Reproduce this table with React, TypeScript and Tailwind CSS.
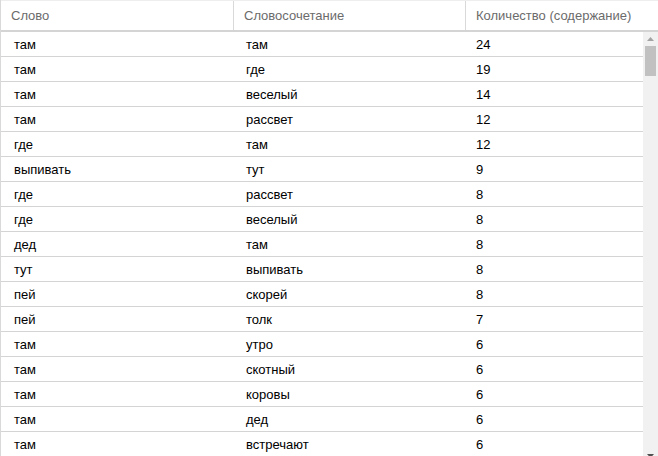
import React from 'react'

const rows: [string, string, number][] = [
  ['там', 'там', 24],
  ['там', 'где', 19],
  ['там', 'веселый', 14],
  ['там', 'рассвет', 12],
  ['где', 'там', 12],
  ['выпивать', 'тут', 9],
  ['где', 'рассвет', 8],
  ['где', 'веселый', 8],
  ['дед', 'там', 8],
  ['тут', 'выпивать', 8],
  ['пей', 'скорей', 8],
  ['пей', 'толк', 7],
  ['там', 'утро', 6],
  ['там', 'скотный', 6],
  ['там', 'коровы', 6],
  ['там', 'дед', 6],
  ['там', 'встречают', 6],
]

function App() {
  return (
    <div className="h-[456px] w-[658px] overflow-hidden border-l border-[#d9d9d9] bg-white font-['Liberation_Sans',Arial,sans-serif] text-[13px]">
      {/* Header */}
      <div className="flex h-[32px] border-b-2 border-t border-[#d4d4d4] border-t-[#eeeeee] text-[#6b6b6b]">
        <div className="flex w-[233px] items-center border-r border-[#d9d9d9] pl-[10px]">Слово</div>
        <div className="flex w-[232px] items-center border-r border-[#d9d9d9] pl-[10px]">Словосочетание</div>
        <div className="flex flex-1 items-center pl-[10px]">Количество (содержание)</div>
      </div>

      {/* Body */}
      <div className="flex h-[424px]">
        <div className="flex-1 overflow-hidden text-black">
          {rows.map(([word, pair, count], i) => (
            <div key={i} className="flex h-[25px] items-center border-b border-[#d4d4d4] pt-[1px]">
              <div className="w-[233px] pl-[13px]">{word}</div>
              <div className="w-[232px] pl-[12px]">{pair}</div>
              <div className="flex-1 pl-[10px]">{count}</div>
            </div>
          ))}
        </div>

        {/* Scrollbar */}
        <div className="relative w-[15px] bg-[#f1f1f1]">
          <svg className="absolute left-[3px] top-[4px]" width="9" height="6" viewBox="0 0 9 6">
            <path d="M4.5 1 L8 5 L1 5 Z" fill="#a3a3a3" />
          </svg>
          <div className="absolute left-[2px] top-[14px] h-[30px] w-[11px] bg-[#c1c1c1]" />
          <svg className="absolute bottom-[-3px] left-[3px]" width="9" height="6" viewBox="0 0 9 6">
            <path d="M1 1 L8 1 L4.5 5 Z" fill="#505050" />
          </svg>
        </div>
      </div>
    </div>
  )
}

export default App
